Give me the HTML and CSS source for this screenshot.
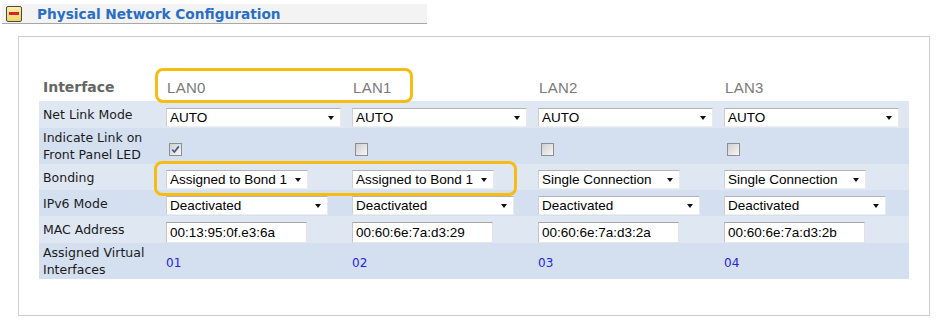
FILE: index.html
```html
<!DOCTYPE html>
<html>
<head>
<meta charset="utf-8">
<title>Physical Network Configuration</title>
<link rel="stylesheet" href="styles.css">
</head>
<body>
<div class="section-bar">
  <span class="toggle"><span class="minus"></span></span>
  <h2 class="section-title">Physical Network Configuration</h2>
</div>
<div class="panel">
  <div class="grid-wrap">
    <table class="cfg">
      <colgroup><col class="c-label"><col class="c-lan"><col class="c-lan"><col class="c-lan"><col class="c-lan"></colgroup>
      <thead>
        <tr class="r-head">
          <th class="h-label">Interface</th>
          <th class="h-lan">LAN0</th>
          <th class="h-lan">LAN1</th>
          <th class="h-lan">LAN2</th>
          <th class="h-lan">LAN3</th>
        </tr>
      </thead>
      <tbody>
        <tr class="r-light r-27">
          <td class="lbl">Net Link Mode</td>
          <td class="val"><span class="sel w-auto"><select><option>AUTO</option></select></span></td>
          <td class="val"><span class="sel w-auto"><select><option>AUTO</option></select></span></td>
          <td class="val"><span class="sel w-auto"><select><option>AUTO</option></select></span></td>
          <td class="val"><span class="sel w-auto"><select><option>AUTO</option></select></span></td>
        </tr>
        <tr class="r-dark r-36">
          <td class="lbl">Indicate Link on<br>Front Panel LED</td>
          <td class="val val-cb"><span class="cb"><svg width="11" height="11" viewBox="0 0 11 11"><path d="M2.3 5.6 L4.4 8 L8.8 2.4" fill="none" stroke="#3d5f94" stroke-width="1.7"/></svg></span></td>
          <td class="val val-cb"><span class="cb"></span></td>
          <td class="val val-cb"><span class="cb"></span></td>
          <td class="val val-cb"><span class="cb"></span></td>
        </tr>
        <tr class="r-light r-26">
          <td class="lbl">Bonding</td>
          <td class="val"><span class="sel w-bond"><select><option>Assigned to Bond 1</option></select></span></td>
          <td class="val"><span class="sel w-bond"><select><option>Assigned to Bond 1</option></select></span></td>
          <td class="val"><span class="sel w-bond"><select><option>Single Connection</option></select></span></td>
          <td class="val"><span class="sel w-bond"><select><option>Single Connection</option></select></span></td>
        </tr>
        <tr class="r-dark r-26">
          <td class="lbl">IPv6 Mode</td>
          <td class="val"><span class="sel w-ipv6"><select><option>Deactivated</option></select></span></td>
          <td class="val"><span class="sel w-ipv6"><select><option>Deactivated</option></select></span></td>
          <td class="val"><span class="sel w-ipv6"><select><option>Deactivated</option></select></span></td>
          <td class="val"><span class="sel w-ipv6"><select><option>Deactivated</option></select></span></td>
        </tr>
        <tr class="r-light r-27">
          <td class="lbl">MAC Address</td>
          <td class="val val-in"><input class="mac" type="text" value="00:13:95:0f.e3:6a"></td>
          <td class="val val-in"><input class="mac" type="text" value="00:60:6e:7a:d3:29"></td>
          <td class="val val-in"><input class="mac" type="text" value="00:60:6e:7a:d3:2a"></td>
          <td class="val val-in"><input class="mac" type="text" value="00:60:6e:7a:d3:2b"></td>
        </tr>
        <tr class="r-dark r-36">
          <td class="lbl">Assigned Virtual<br>Interfaces</td>
          <td class="val val-link"><a class="vif" href="#">01</a></td>
          <td class="val val-link"><a class="vif" href="#">02</a></td>
          <td class="val val-link"><a class="vif" href="#">03</a></td>
          <td class="val val-link"><a class="vif" href="#">04</a></td>
        </tr>
      </tbody>
    </table>
    <div class="hl hl-head"></div>
    <div class="hl hl-bond"></div>
  </div>
</div>
</body>
</html>
```

FILE: styles.css
```css
html, body {
  margin: 0;
  padding: 0;
  background: #ffffff;
}

body {
  font-family: "DejaVu Sans", Verdana, sans-serif;
  color: #1a1a1a;
}

.section-bar {
  display: flex;
  align-items: center;
  width: 425px;
  height: 19px;
  margin: 4px 0 0 2px;
  background: #f3f3f3;
  border-bottom: 1px solid #a8a8a8;
}

.toggle {
  display: flex;
  align-items: center;
  justify-content: center;
  box-sizing: border-box;
  width: 16px;
  height: 16px;
  margin-left: 4px;
  border: 1px solid #4a4a3a;
  border-radius: 2px;
  background: linear-gradient(#fbf0a8, #efd56a);
}

.minus {
  display: block;
  width: 10px;
  height: 3px;
  background: #d8232a;
}

.section-title {
  margin: 1px 0 0 15px;
  font-family: "DejaVu Sans", Verdana, sans-serif;
  font-size: 13.7px;
  font-weight: bold;
  color: #2a6ec6;
  line-height: 19px;
}

.panel {
  box-sizing: border-box;
  width: 912px;
  margin: 12px 0 0 18px;
  padding: 36px 0 36px 20px;
  border: 1px solid #cfcfcf;
}

.grid-wrap {
  position: relative;
  width: 870px;
}

.cfg {
  width: 870px;
  border-collapse: collapse;
  border-spacing: 0;
  table-layout: fixed;
}

.c-label { width: 126px; }
.c-lan { width: 186px; }

.cfg th, .cfg td {
  padding: 0;
}

.cfg .r-head {
  height: 28px;
}

.cfg .h-label {
  text-align: left;
  padding-left: 4px;
  font-family: "DejaVu Sans", Verdana, sans-serif;
  font-size: 14px;
  font-weight: bold;
  color: #666666;
  vertical-align: middle;
}

.cfg .h-lan {
  text-align: left;
  padding-left: 2px;
  font-family: "Liberation Sans", Arial, sans-serif;
  font-size: 15px;
  font-weight: normal;
  color: #7a7a7a;
  vertical-align: middle;
  letter-spacing: 0.3px;
}

.r-light { background: #dfe7f3; }
.r-dark { background: #d4e0f0; }

.r-26 { height: 26px; }
.r-27 { height: 27px; }
.r-36 { height: 36px; }

.cfg .lbl {
  padding-left: 4px;
  font-size: 12.5px;
  line-height: 17px;
  color: #1a1a1a;
  vertical-align: middle;
}

.cfg .val {
  padding-left: 1px;
  padding-bottom: 1px;
  vertical-align: bottom;
  line-height: 0;
}

.cfg .val-cb {
  padding-left: 4px;
  padding-bottom: 8px;
}

.cfg .val-in {
  padding-bottom: 0;
}

.cfg .val-link {
  vertical-align: middle;
  line-height: 16px;
  padding-top: 3px;
  padding-bottom: 0;
}

.sel {
  position: relative;
  display: inline-block;
}

.sel select {
  appearance: none;
  -webkit-appearance: none;
  box-sizing: border-box;
  display: block;
  height: 19px;
  margin: 0;
  padding: 0 0 0 3px;
  border: 1px solid;
  border-color: #b4b4b4 #e9e9e9 #eeeeee #d0d0d0;
  border-radius: 0;
  background: #ffffff;
  font-family: "Liberation Sans", Arial, sans-serif;
  font-size: 13.5px;
  color: #000000;
  line-height: 17px;
}

.sel::after {
  content: "";
  position: absolute;
  right: 7px;
  top: 8px;
  border-left: 3.5px solid transparent;
  border-right: 3.5px solid transparent;
  border-top: 4px solid #111111;
  pointer-events: none;
}

.w-auto select { width: 175px; }
.w-bond select { width: 142px; }
.w-ipv6 select { width: 162px; }

.cb {
  display: inline-flex;
  align-items: center;
  justify-content: center;
  box-sizing: border-box;
  width: 13px;
  height: 13px;
  border: 1px solid #8e8e8e;
  background: linear-gradient(135deg, #cfcfcf, #f7f7f7);
}

.mac {
  box-sizing: border-box;
  width: 141px;
  height: 21px;
  margin: 0;
  padding: 0 0 0 3px;
  border: 1px solid;
  border-color: #a6a6a6 #e2e2e2 #e6e6e6 #c4c4c4;
  background: #ffffff;
  font-family: "Liberation Sans", Arial, sans-serif;
  font-size: 13.5px;
  color: #000000;
  outline: none;
}

.vif {
  font-family: "DejaVu Sans", Verdana, sans-serif;
  font-size: 12px;
  color: #2323e6;
  text-decoration: none;
}

.hl {
  position: absolute;
  box-sizing: border-box;
  border: 3px solid #f7bc12;
  border-radius: 8px;
  pointer-events: none;
}

.hl-head {
  left: 116px;
  top: -5px;
  width: 258px;
  height: 35px;
}

.hl-bond {
  left: 115px;
  top: 88px;
  width: 363px;
  height: 35px;
}
```
